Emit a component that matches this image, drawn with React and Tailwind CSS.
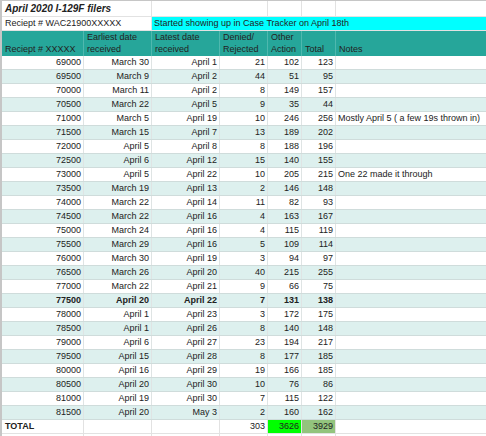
import React from "react";

const rows = [
  ["69000", "March 30", "April 1", "21", "102", "123", ""],
  ["69500", "March 9", "April 2", "44", "51", "95", ""],
  ["70000", "March 11", "April 2", "8", "149", "157", ""],
  ["70500", "March 22", "April 5", "9", "35", "44", ""],
  ["71000", "March 5", "April 19", "10", "246", "256", "Mostly April 5 ( a few 19s thrown in)"],
  ["71500", "March 15", "April 7", "13", "189", "202", ""],
  ["72000", "April 5", "April 8", "8", "188", "196", ""],
  ["72500", "April 6", "April 12", "15", "140", "155", ""],
  ["73000", "April 5", "April 22", "10", "205", "215", "One 22 made it through"],
  ["73500", "March 19", "April 13", "2", "146", "148", ""],
  ["74000", "March 22", "April 14", "11", "82", "93", ""],
  ["74500", "March 22", "April 16", "4", "163", "167", ""],
  ["75000", "March 24", "April 16", "4", "115", "119", ""],
  ["75500", "March 29", "April 16", "5", "109", "114", ""],
  ["76000", "March 30", "April 19", "3", "94", "97", ""],
  ["76500", "March 26", "April 20", "40", "215", "255", ""],
  ["77000", "March 22", "April 21", "9", "66", "75", ""],
  ["77500", "April 20", "April 22", "7", "131", "138", ""],
  ["78000", "April 1", "April 23", "3", "172", "175", ""],
  ["78500", "April 1", "April 26", "8", "140", "148", ""],
  ["79000", "April 6", "April 27", "23", "194", "217", ""],
  ["79500", "April 15", "April 28", "8", "177", "185", ""],
  ["80000", "April 16", "April 29", "19", "166", "185", ""],
  ["80500", "April 20", "April 30", "10", "76", "86", ""],
  ["81000", "April 19", "April 30", "7", "115", "122", ""],
  ["81500", "April 20", "May 3", "2", "160", "162", ""],
];

const grid = "grid grid-cols-[82px_68px_68px_48px_34px_34px_1fr]";

export default function App() {
  return (
    <div className="w-[486px] h-[436px] overflow-hidden bg-white font-['Liberation_Sans',Arial,sans-serif] text-[9px] text-[#222]">
      <div className="border-l-2 border-t border-[#c6c6c6]">
        {/* Title row */}
        <div className="grid grid-cols-[150px_116px_34px_34px_1fr] h-[16px] border-b border-[#e2e2e2]">
          <div className="border-r border-[#e2e2e2] px-[3px] text-[10px] leading-[15px] font-bold italic whitespace-nowrap">
            April 2020 I-129F filers
          </div>
          <div className="border-r border-[#e2e2e2]" />
          <div className="border-r border-[#e2e2e2]" />
          <div className="border-r border-[#e2e2e2]" />
          <div />
        </div>
        {/* Receipt row */}
        <div className="grid grid-cols-[150px_1fr] h-[14px] border-b border-[#e2e2e2]">
          <div className="border-r border-[#e2e2e2] px-[3px] leading-[13px] whitespace-nowrap">
            Reciept # WAC21900XXXXX
          </div>
          <div className="bg-[#00ffff] px-[2px] leading-[13px] whitespace-nowrap">
            Started showing up in Case Tracker on April 18th
          </div>
        </div>
        {/* Header */}
        <div className={`${grid} h-[25px] bg-[#26a69a] leading-[11.5px]`}>
          <div className="border-r border-[#4fb8ae] px-[3px] flex items-end pb-[1px]">Reciept # XXXXX</div>
          <div className="border-r border-[#4fb8ae] px-[3px] flex items-end pb-[1px]">Earliest date<br />received</div>
          <div className="border-r border-[#4fb8ae] px-[3px] flex items-end pb-[1px]">Latest date<br />received</div>
          <div className="border-r border-[#4fb8ae] px-[3px] flex items-end pb-[1px]">Denied/<br />Rejected</div>
          <div className="border-r border-[#4fb8ae] px-[3px] flex items-end pb-[1px]">Other<br />Action</div>
          <div className="border-r border-[#4fb8ae] px-[3px] flex items-end pb-[1px]">Total</div>
          <div className="px-[3px] flex items-end pb-[1px]">Notes</div>
        </div>
        {/* Data rows */}
        {rows.map((r, i) => {
          const tint = i % 2 === 1;
          const bold = r[0] === "77500";
          return (
            <div
              key={r[0]}
              className={`${grid} h-[14px] border-b border-[#cfdcdb] leading-[13px] ${tint ? "bg-[#ddf0ee]" : "bg-white"} ${bold ? "font-bold" : ""}`}
            >
              {r.slice(0, 6).map((c, j) => (
                <div key={j} className="border-r border-[#dfe4e4] px-[2px] text-right whitespace-nowrap">
                  {c}
                </div>
              ))}
              <div className="px-[2px] whitespace-nowrap">{r[6]}</div>
            </div>
          );
        })}
        {/* Total row */}
        <div className={`${grid} h-[14px] border-b border-[#e2e2e2] leading-[13px]`}>
          <div className="border-r border-[#e2e2e2] px-[3px] font-bold">TOTAL</div>
          <div className="border-r border-[#e2e2e2]" />
          <div className="border-r border-[#e2e2e2]" />
          <div className="border-r border-[#e2e2e2] px-[2px] text-right">303</div>
          <div className="border-r border-[#e2e2e2] bg-[#00ff00] px-[2px] text-right">3626</div>
          <div className="border-r border-[#e2e2e2] bg-[#93c47d] px-[2px] text-right">3929</div>
          <div />
        </div>
        <div className={`${grid} h-[14px]`}>
          <div className="border-r border-[#e2e2e2]" />
          <div className="border-r border-[#e2e2e2]" />
          <div className="border-r border-[#e2e2e2]" />
          <div className="border-r border-[#e2e2e2]" />
          <div className="border-r border-[#e2e2e2]" />
          <div className="border-r border-[#e2e2e2]" />
          <div />
        </div>
      </div>
    </div>
  );
}
